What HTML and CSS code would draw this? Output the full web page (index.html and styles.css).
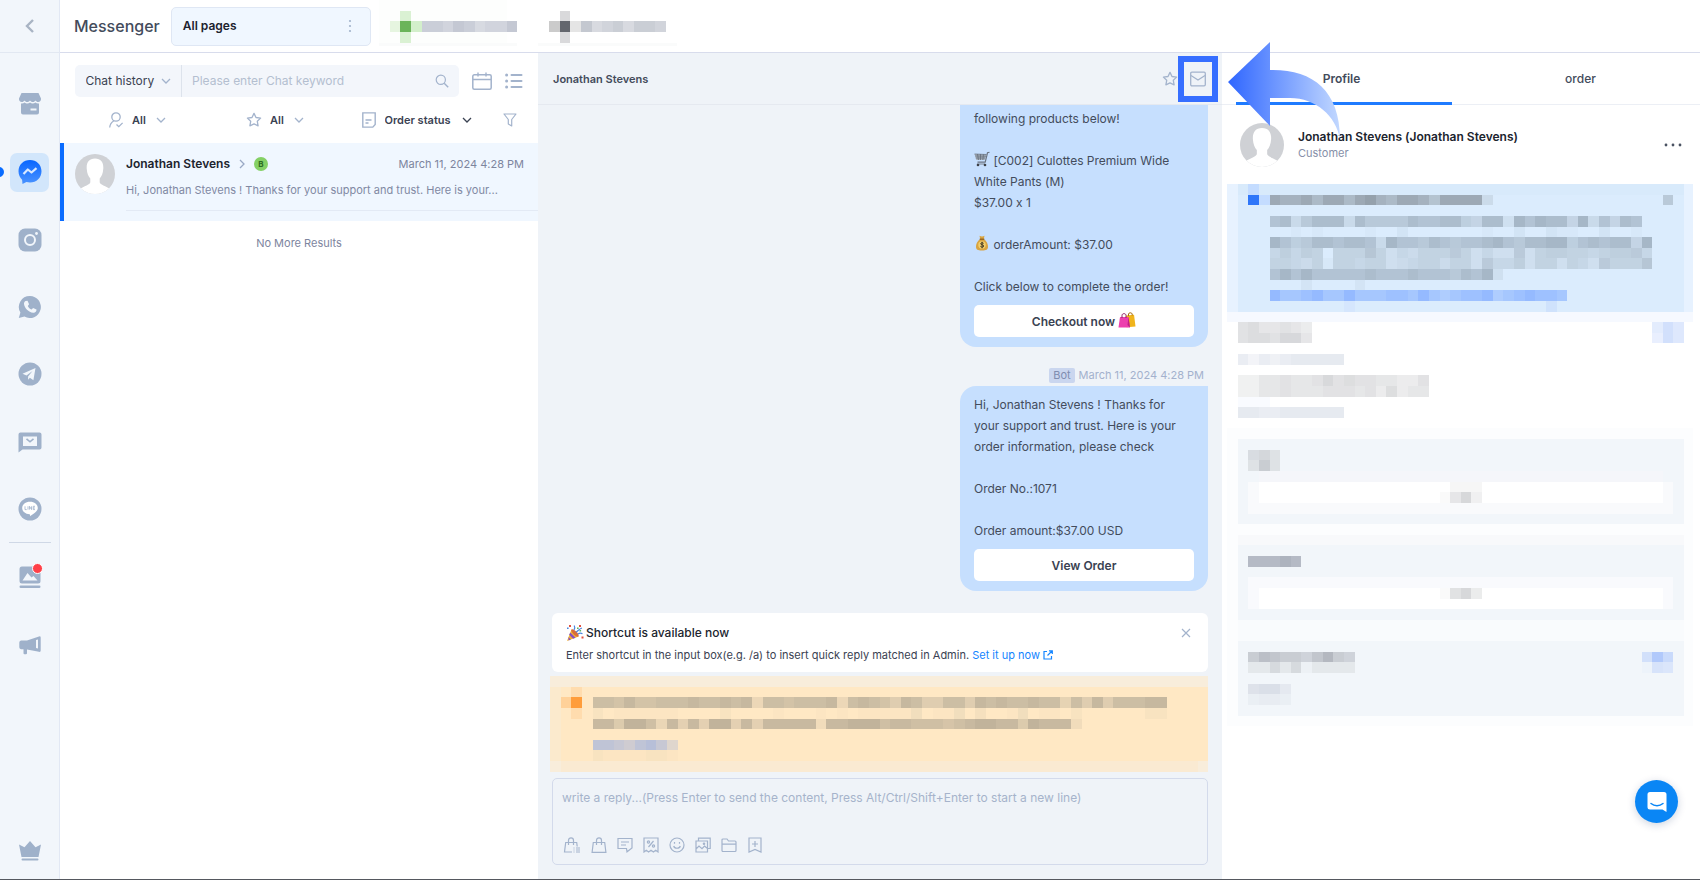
FILE: index.html
```html
<!DOCTYPE html>
<html lang="en">
<head>
<meta charset="utf-8">
<title>Messenger</title>
<link rel="stylesheet" href="styles.css">
</head>
<body>
<svg class="defs" width="0" height="0" aria-hidden="true">
  <defs>
    <symbol id="chevron" viewBox="0 0 10 10"><path d="M1 3l4 4 4-4" fill="none" stroke="currentColor" stroke-width="1.3"/></symbol>
    <symbol id="star" viewBox="0 0 16 16"><path d="M8 1.400l2 4.100 4.600.6-3.300 3.200.8 4.500L8 11.900l-4.100 1.900.8-4.500L1.400 6.100 6 5.500z" fill="none" stroke="currentColor" stroke-width="1.3" stroke-linejoin="round"/></symbol>
    <symbol id="avatar" viewBox="0 0 40 40"><clipPath id="round"><circle cx="20" cy="20" r="20"/></clipPath><g clip-path="url(#round)"><path fill="#cfd1d5" d="M0 0h40v40H0z"/><path fill="#fff" d="M20 4.500c6 0 8.600 4 8.300 10-.3 5-1.800 8-3.600 10v4c1.500 3.500 9 3.500 12.300 9v4H3v-4c3.300-5.500 10.800-5.500 12.300-9v-4c-1.800-2-3.300-5-3.600-10-.3-6 2.300-10 8.300-10z"/></g></symbol>
  </defs>
</svg>
<div class="app">
  <nav class="rail" aria-label="Channels">
    <button class="rail-back" aria-label="Back"><svg width="12" height="16" viewBox="0 0 12 16"><path d="M9 2L3 8l6 6" fill="none" stroke="currentColor" stroke-width="2.400"/></svg></button>
    <div class="rail-list">
      <a class="rail-item" href="#" aria-label="Store"><svg width="24" height="24" viewBox="0 0 24 24" fill="currentColor"><path d="M3.500 1h17l2.500 5.500c.2 2-1 3.500-2.800 3.500-1.200 0-2.200-.6-2.700-1.500-.5.900-1.500 1.500-2.700 1.500S12.500 9.400 12 8.500c-.5.900-1.600 1.500-2.800 1.500S7 9.400 6.500 8.500C6 9.400 5 10 3.800 10 2 10 .8 8.500 1 6.500z"/><path d="M3 11.500c1.500.2 2.700-.2 3.600-1 .9.800 1.700 1 2.700 1s1.900-.3 2.700-1c.8.700 1.700 1 2.700 1s1.900-.3 2.700-1c.9.800 2.100 1.200 3.600 1V20.500a2 2 0 0 1-2 2H5a2 2 0 0 1-2-2z"/><path fill="#f2f6fb" d="M12.500 16.500h6V18.500h-6z"/></svg></a>
      <a class="rail-item active" href="#" aria-label="Messenger"><span class="rail-box"><svg width="24" height="26" viewBox="0 0 24 26"><defs><linearGradient id="msg" x2="0" y2="1"><stop stop-color="#0866ff"/><stop offset="1" stop-color="#4a93ff"/></linearGradient></defs><path fill="url(#msg)" d="M12 1c6.500 0 11.500 4.800 11.500 11.200S18.500 23.500 12 23.500c-1.300 0-2.500-.2-3.600-.5L4.500 25l-.4-4.200C1.900 18.700.5 15.700.5 12.200.5 5.800 5.500 1 12 1z"/><path d="M5.500 15l4.300-4.500 3.700 3 5-4.300" fill="none" stroke="#d9e9ff" stroke-width="2.200" stroke-linejoin="round"/></svg></span></a>
      <a class="rail-item short" href="#" aria-label="Instagram"><svg width="24" height="24" viewBox="0 0 24 24"><rect x=".5" y=".5" width="23" height="23" rx="6.500" fill="currentColor"/><circle cx="12" cy="12" r="5" fill="none" stroke="#f2f6fb" stroke-width="2"/><circle cx="18.500" cy="5.500" r="1.400" fill="#f2f6fb"/></svg></a>
      <a class="rail-item short" href="#" aria-label="WhatsApp"><svg width="24" height="24" viewBox="0 0 24 24"><path fill="currentColor" d="M12 1a11 11 0 1 1-5.500 20.600L.8 23l1.600-5.400A11 11 0 0 1 12 1z"/><path fill="#f2f6fb" d="M7.500 6l2-.3 1.600 3.600-1.300 1.600c.9 1.700 2 2.800 3.800 3.600l1.500-1.500 3.400 1.600c.2 2-1.400 3.400-3.300 3.200C10.500 17.300 6.500 13 6 9c-.1-1.200.5-2.300 1.500-3z"/></svg></a>
      <a class="rail-item" href="#" aria-label="Telegram"><svg width="24" height="24" viewBox="0 0 24 24"><circle cx="12" cy="12" r="11.500" fill="currentColor"/><path fill="#f2f6fb" d="M17.500 6L4.500 11.800l4 1.700 6-4.500-4.400 5.600v3.200l1.800-2.100 3.500 2.500z"/></svg></a>
      <a class="rail-item short" href="#" aria-label="SMS"><svg width="24" height="22" viewBox="0 0 24 22"><path fill="currentColor" d="M2.500 1.500h19a2 2 0 0 1 2 2v13a2 2 0 0 1-2 2H4.500L.5 21.500v-18a2 2 0 0 1 2-2z"/><path fill="#f2f6fb" d="M5 5.500h14v9.500H5z"/><path d="M8.500 7.800L12 10.800l3.500-3" fill="none" stroke="currentColor" stroke-width="1.600"/></svg></a>
      <a class="rail-item short" href="#" aria-label="LINE"><svg width="24" height="24" viewBox="0 0 24 24"><circle cx="12" cy="12" r="11.500" fill="currentColor"/><path fill="#fff" d="M12 4.800c4.400 0 7.800 2.700 7.800 6.200 0 3-3 5-7.800 8.300.2-1.100.1-1.800-.4-2-4.200-.3-7.400-2.900-7.400-6.300 0-3.500 3.400-6.200 7.800-6.200z"/><path d="M7 9.300v3.300h1.700M10 9.300v3.300M11.500 12.600V9.300l2 3.300V9.300M17 9.300h-1.800v3.300H17M15.200 11H17" stroke="currentColor" stroke-width=".8" fill="none"/></svg></a>
    </div>
    <hr class="rail-rule">
    <div class="rail-list">
      <a class="rail-item" href="#" aria-label="Gallery"><svg width="24" height="24" viewBox="0 0 24 24"><rect x="1.500" y="1.500" width="21" height="17" rx="2.500" fill="currentColor"/><path fill="#f2f6fb" d="M4.500 15.500l5-7.500 4 4.500 2-1.500 4 4.500z"/><rect x="1.500" y="20.500" width="21" height="2.500" rx="1.200" fill="currentColor"/></svg><i class="dot"></i></a>
      <a class="rail-item" href="#" aria-label="Broadcast"><svg width="24" height="24" viewBox="0 0 24 24"><path fill="currentColor" d="M3 7.500h6L21 3.400a1.300 1.300 0 0 1 1.700 1.200v13a1.300 1.300 0 0 1-1.700 1.200L9 16.500v3.800a1 1 0 0 1-1 1H6.500a1 1 0 0 1-1-1v-4H3a2 2 0 0 1-1.700-2v-4.800A2 2 0 0 1 3 7.500z"/><path fill="#f2f6fb" d="M18 7l2-.6v9.200l-2-.6z"/></svg></a>
    </div>
    <a class="rail-item rail-end" href="#" aria-label="Plans"><svg width="24" height="24" viewBox="0 0 24 24" fill="currentColor"><path d="M1 5.500l5.500 2.700L12 2l5.500 6.200L23 5.500 20.500 18h-17z"/><rect x="3.500" y="19.500" width="17" height="2" rx="1"/></svg></a>
  </nav>

  <header class="topbar">
    <h1>Messenger</h1>
    <button class="page-tab">All pages <svg width="4" height="14" viewBox="0 0 4 14" fill="currentColor"><circle cx="2" cy="2" r="1.100"/><circle cx="2" cy="7" r="1.100"/><circle cx="2" cy="12" r="1.100"/></svg></button>
    <svg class="mosaic top-mosaic" data-mosaic="pages" viewBox="0 0 304 46" aria-hidden="true"></svg>
  </header>

  <section class="inbox" aria-label="Conversations">
    <div class="search-row">
      <div class="search">
        <label class="pick scope"><select aria-label="Search scope"><option>Chat history</option></select><svg width="10" height="10"><use href="#chevron"/></svg></label>
        <input type="text" placeholder="Please enter Chat keyword" aria-label="Chat keyword">
        <button class="plain" aria-label="Search"><svg width="14" height="14" viewBox="0 0 14 14"><circle cx="5.800" cy="5.800" r="4.600" fill="none" stroke="currentColor" stroke-width="1.200"/><path d="M9.200 9.200l4 4" stroke="currentColor" stroke-width="1.400"/></svg></button>
      </div>
      <button class="plain" aria-label="Calendar"><svg width="20" height="18" viewBox="0 0 20 18"><rect x=".8" y="2.800" width="18.400" height="14.400" rx="1.500" fill="none" stroke="currentColor" stroke-width="1.500"/><path d="M1 7.500h18M6 .5v4M14 .5v4" stroke="currentColor" stroke-width="1.400"/></svg></button>
      <button class="plain" aria-label="List view"><svg width="18" height="16" viewBox="0 0 18 16" fill="currentColor"><circle cx="1.600" cy="2" r="1.500"/><circle cx="1.600" cy="8" r="1.500"/><circle cx="1.600" cy="14" r="1.500"/><rect x="5.500" y="1" width="12" height="2" rx="1"/><rect x="5.500" y="7" width="12" height="2" rx="1"/><rect x="5.500" y="13" width="12" height="2" rx="1"/></svg></button>
    </div>
    <div class="filters">
      <label class="pick"><svg class="pick-icon" width="16" height="16" viewBox="0 0 16 16" fill="none" stroke="currentColor" stroke-width="1.300"><circle cx="8" cy="5" r="4.200"/><path d="M1.700 15.500c.3-3 1.700-5.200 4-6.500M8.500 12.500l2.300 2.200 3.800-3.800"/></svg><select aria-label="Assignee"><option>All</option></select><svg width="10" height="10"><use href="#chevron"/></svg></label>
      <label class="pick"><svg class="pick-icon" width="16" height="16"><use href="#star"/></svg><select aria-label="Starred"><option>All</option></select><svg width="10" height="10"><use href="#chevron"/></svg></label>
      <label class="pick dark"><svg class="pick-icon" width="16" height="16" viewBox="0 0 16 16" fill="none" stroke="currentColor" stroke-width="1.400"><path d="M1.800.9h12.400v11.600l-2.400 2.600H1.800zM4.500 8h6M4.500 11h3"/></svg><select aria-label="Order status"><option>Order status</option></select><svg width="10" height="10"><use href="#chevron"/></svg></label>
      <button class="plain" aria-label="Filter"><svg width="14" height="14" viewBox="0 0 14 14"><path d="M1 1h12L8.700 6.500v6.400L5.300 11V6.500z" fill="none" stroke="currentColor" stroke-width="1.200" stroke-linejoin="round"/></svg></button>
    </div>
    <a class="thread" href="#">
      <svg width="40" height="40"><use href="#avatar"/></svg>
      <div class="thread-body">
        <div class="thread-top"><strong>Jonathan Stevens</strong><svg width="6" height="10" viewBox="0 0 6 10"><path d="M1 1l4 4-4 4" fill="none" stroke="currentColor" stroke-width="1.300"/></svg><b class="badge">B</b><time>March 11, 2024 4:28 PM</time></div>
        <p>Hi, Jonathan Stevens ! Thanks for your support and trust. Here is your...</p>
      </div>
    </a>
    <p class="no-more">No More Results</p>
  </section>

  <main class="chat">
    <header class="chat-head">
      <h2>Jonathan Stevens</h2>
      <button class="plain" aria-label="Star"><svg width="16" height="16"><use href="#star"/></svg></button>
      <button class="plain marked" aria-label="Mark as unread"><svg width="16" height="16" viewBox="0 0 16 16"><rect x=".7" y="1.200" width="14.600" height="13.600" rx="1.200" fill="none" stroke="currentColor" stroke-width="1.300"/><path d="M1 4.500l7 4.500 7-4.500" fill="none" stroke="currentColor" stroke-width="1.300"/></svg></button>
    </header>
    <div class="messages">
      <article class="bubble cut">
        <p>following products below!</p>
        <br>
        <p><svg class="emoji" width="16" height="16" viewBox="0 0 16 16"><path d="M15.500 1.200l-2 .6-2.300 9.400H3.500" fill="none" stroke="#6b7482" stroke-width="1.200"/><path fill="#a9b2bd" d="M.5 3l12 .5-1.700 5.500H2.300z"/><path d="M.5 3l12 .5M1.200 5l10.800.2M1.800 7h9.600M3.500 3l1 6M6.500 3v6M9.500 3.300L8.800 9" stroke="#5f6875" stroke-width=".7"/><path d="M3 13h8" stroke="#7c8490"/><circle cx="4" cy="14" r="1.300" fill="#3d4148"/><circle cx="11" cy="14" r="1.300" fill="#3d4148"/></svg> [C002] Culottes Premium Wide White Pants (M)</p>
        <p>$37.00 x 1</p>
        <br>
        <p><svg class="emoji" width="16" height="16" viewBox="0 0 16 16"><path fill="#d9a441" d="M5.500.8c1.600.8 3.400.8 5 0L9.800 4c3 2 4.400 5.300 4.200 8-.1 2.500-1.500 3.500-6 3.500s-5.900-1-6-3.500c-.2-2.700 1.200-6 4.200-8z"/><path fill="#8a5a1c" d="M5.700 3.600h4.600v1.200H5.700z"/><circle cx="8" cy="10" r="3.700" fill="#f4d06a"/><path d="M9.600 8.400c-.5-.9-3-.8-3 .4s3.200.8 3.200 2.200-2.800 1.400-3.400.3M8.100 6.800v6.500" fill="none" stroke="#463a22" stroke-width="1"/></svg> orderAmount: $37.00</p>
        <br>
        <p>Click below to complete the order!</p>
        <button class="cta">Checkout now <svg class="emoji" width="18" height="16" viewBox="0 0 18 16"><path fill="#f0b41c" d="M8 3.500l8-.8 1.500 11.800-9 .8z"/><path d="M10.500 4V2c0-1.500 3.500-1.700 3.700 0v1.500" fill="none" stroke="#a66d12"/><path fill="#ec3fae" d="M2 5h8.500L12 15.500H.5z"/><path fill="#c01f86" d="M10.500 5L12 15.500 9.500 13z"/><path d="M4 6V3.500C4 1 8 1 8 3.500V6" fill="none" stroke="#8e1c64"/></svg></button>
      </article>
      <div class="meta"><span class="bot">Bot</span><time>March 11, 2024 4:28 PM</time></div>
      <article class="bubble">
        <p>Hi, Jonathan Stevens ! Thanks for your support and trust. Here is your order information, please check</p>
        <br>
        <p>Order No.:1071</p>
        <br>
        <p>Order amount:$37.00 USD</p>
        <button class="cta">View Order</button>
      </article>
    </div>
    <div class="chat-foot">
      <aside class="tip">
        <div class="tip-title"><svg width="18" height="18" viewBox="0 0 18 18"><path fill="#f2b632" d="M5.500 5.500l7 7L1 17z"/><path fill="#8a4fc0" d="M4.300 8.500l5.300 5.200-2.500 1-4-4zM2.400 13l2.500 2.500-2.300.9z"/><path fill="#d96d3a" d="M5.500 5.500c1-1 3 .3 4.700 2s3.200 4 2.300 5c-1 .8-3.200-.6-4.900-2.300S4.600 6.400 5.500 5.500z"/><path d="M8 6c1-1.500 1-3 .2-4.500M12 10c1.500-1 3-1 4.500-.2M10 8c2-1 3-3 6-4" fill="none" stroke="#4a86e0" stroke-width="1.200"/><path fill="#e2503f" d="M3 1h2v2H3zM13 1h2v2h-2zM15.500 12.500h2v2h-2z"/><path fill="#58b565" d="M11 3.500h1.600v1.600H11zM13.500 6h1.600v1.600h-1.600z"/><path fill="#4a86e0" d="M1 3.500h1.600v1.600H1z"/></svg><strong>Shortcut is available now</strong><button class="plain" aria-label="Close"><svg width="10" height="10" viewBox="0 0 10 10"><path d="M1 1l8 8M9 1L1 9" stroke="currentColor" stroke-width="1.200"/></svg></button></div>
        <p>Enter shortcut in the input box(e.g. /a) to insert quick reply matched in Admin. <a href="#">Set it up now <svg width="10" height="10" viewBox="0 0 10 10" fill="none" stroke="currentColor" stroke-width="1.200"><path d="M4 1.500H1v7.500h7.500V6M6 .8h3.300V4M9 1L4.500 5.500"/></svg></a></p>
      </aside>
      <svg class="mosaic notice" data-mosaic="notice" viewBox="0 0 658 96" aria-hidden="true"></svg>
      <div class="composer">
        <textarea rows="1" aria-label="Reply" placeholder="write a reply...(Press Enter to send the content, Press Alt/Ctrl/Shift+Enter to start a new line)"></textarea>
        <div class="tools">
          <button class="plain" aria-label="Order"><svg width="18" height="16" viewBox="0 0 18 16"><path d="M9 15H1.500L2.700 5.500h11l.5 4M5.500 8V3.500c0-3.500 5-3.500 5 0V8"/><path d="M10.500 11h1M13 11h4M10.500 13h1M13 13h4M10.500 15h1M13 15h4"/></svg></button>
          <button class="plain" aria-label="Products"><svg width="16" height="16" viewBox="0 0 16 16"><path d="M2.300 5.500h11.400l1.200 9.800H1.100zM5.500 8V3.500c0-3.500 5-3.500 5 0V8"/></svg></button>
          <button class="plain" aria-label="Quick reply"><svg width="16" height="16" viewBox="0 0 16 16"><path d="M1 1.500h14v9.500l-5 3.800-.5-3.300H1zM4 5h8M4 8h5"/></svg></button>
          <button class="plain" aria-label="Coupon"><svg width="16" height="16" viewBox="0 0 16 16"><path d="M1 1h14v14l-2.300-1.700L10.400 15 8 13.300 5.600 15l-2.300-1.700L1 15zM5.500 10l5-6"/><circle cx="5.500" cy="5" r="1.100"/><circle cx="10.500" cy="9" r="1.100"/></svg></button>
          <button class="plain" aria-label="Emoji"><svg width="16" height="16" viewBox="0 0 16 16"><circle cx="8" cy="8" r="7"/><path d="M4.700 9c.7 3 5.900 3 6.600 0M5.500 5v1.800M10.500 5v1.800"/></svg></button>
          <button class="plain" aria-label="Image"><svg width="16" height="16" viewBox="0 0 16 16"><path d="M3.500 4V1.200h11.700v10.300H12.500M1 4h11.500v11H1zM1 12l3-3 3 2.700L9.500 9l3 2.500"/><circle cx="9" cy="6.700" r=".7"/></svg></button>
          <button class="plain" aria-label="File"><svg width="16" height="16" viewBox="0 0 16 16"><path d="M2 14.500a1 1 0 0 1-1-1V3a1 1 0 0 1 1-1h4l1.500 2H14a1 1 0 0 1 1 1v8.500a1 1 0 0 1-1 1zM1 7.200h14"/></svg></button>
          <button class="plain" aria-label="Save"><svg width="16" height="16" viewBox="0 0 16 16"><path d="M2 1h12v14l-6-2.500L2 15zM8 4v6M5 7h6"/></svg></button>
        </div>
      </div>
    </div>
  </main>

  <aside class="profile">
    <div class="tabs">
      <button class="tab on">Profile</button>
      <button class="tab">order</button>
    </div>
    <svg class="arrow" width="114" height="98" viewBox="0 0 114 98" aria-hidden="true"><defs><linearGradient id="arw" x2="1"><stop stop-color="#2f66ff"/><stop offset="1" stop-color="#c2d8ff"/></linearGradient></defs><path fill="url(#arw)" d="M0 40L42 0v28C84 27 112 48 112 97 108 74 88 56 62 56H42v28z"/></svg>
    <div class="person">
      <svg width="44" height="44"><use href="#avatar"/></svg>
      <div><h3>Jonathan Stevens (Jonathan Stevens)</h3><p>Customer</p></div>
      <button class="plain more" aria-label="More"><svg width="18" height="4" viewBox="0 0 18 4" fill="currentColor"><circle cx="2" cy="2" r="1.400"/><circle cx="9" cy="2" r="1.400"/><circle cx="16" cy="2" r="1.400"/></svg></button>
    </div>
    <svg class="mosaic details" data-mosaic="details" viewBox="0 0 466 543" aria-hidden="true"></svg>
  </aside>
</div>
<button class="help" aria-label="Open chat support"><svg width="20" height="22" viewBox="0 0 20 22"><path fill="#fff" d="M3 1h14a2.500 2.500 0 0 1 2.500 2.500V21l-4-2.500H3A2.500 2.500 0 0 1 .5 16V3.500A2.500 2.500 0 0 1 3 1z"/><path d="M4 12.500c3.500 3 8.500 3 12 0" fill="none" stroke="#0a86f5" stroke-width="1.500" stroke-linecap="round"/></svg></button>
<script src="mosaic.js"></script>
</body>
</html>
```
FILE: styles.css
```css
* { box-sizing: border-box; }
body {
  margin: 0;
  font-family: Inter, "Liberation Sans", sans-serif;
  font-size: 12px;
  line-height: 16px;
  font-feature-settings: "calt" 0;
  color: #3a4252;
  background: #fff;
}
h1, h2, h3, p { margin: 0; font-weight: 400; }
a { color: inherit; text-decoration: none; }
button, select, input, textarea { font: inherit; color: inherit; border: 0; background: none; padding: 0; margin: 0; }
select { appearance: none; }
svg { display: block; flex: none; }
.defs { position: absolute; }
.plain { color: #a3b3cc; display: flex; align-items: center; justify-content: center; }

.app {
  display: grid;
  grid-template: 53px 1fr / 60px 478px 1fr 478px;
  height: 100vh;
  border-bottom: 1px solid #55585f;
}

/* channel rail */
.rail {
  grid-row: 1 / 3;
  display: flex;
  flex-direction: column;
  background: #f2f6fb;
  border-right: 1px solid #e2e8f4;
  color: #9fb1ca;
}
.rail-back { height: 53px; border-bottom: 1px solid #e2e8f2; color: #a9b4c4; display: flex; align-items: center; justify-content: center; margin-bottom: 17px; }
.rail-item { position: relative; display: flex; align-items: center; justify-content: center; height: 68px; }
.rail-item.short { height: 67px; }
.rail-box { display: flex; align-items: center; justify-content: center; width: 39px; height: 39px; border-radius: 7px; background: #d2e6fb; }
.rail-item.active::before { content: ""; position: absolute; left: -6px; top: 29px; width: 10px; height: 10px; border-radius: 50%; background: #0a6cff; }
.rail-rule { width: 42px; height: 1px; margin: 0 auto; border: 0; background: #cfd8e6; }
.dot { position: absolute; left: 32px; top: 20px; width: 11px; height: 11px; border-radius: 50%; background: #ff4048; border: 1px solid #fff; }
.rail-end { margin-top: auto; height: 56px; }

/* top bar */
.topbar {
  grid-column: 2 / 5;
  display: flex;
  align-items: center;
  border-bottom: 1px solid #d8dcec;
  padding-left: 14px;
}
.topbar h1 { font-size: 16px; font-weight: 500; line-height: 20px; color: #434b5b; margin-right: 11px; }
.page-tab {
  display: flex; align-items: center; justify-content: space-between;
  width: 200px; height: 39px; padding: 0 18px 0 11px;
  border: 1px solid #dfe7f4; border-radius: 5px; background: #f0f7ff;
  font-weight: 600; color: #1c222e;
}
.page-tab svg { color: #a3b3cc; }
.top-mosaic { width: 304px; height: 46px; align-self: flex-start; margin-left: 8px; }

/* conversation list */
.inbox { min-width: 0; }
.search-row { display: flex; align-items: center; gap: 13px; padding: 12px 15px 0; }
.search { flex: 1; display: flex; align-items: center; height: 32px; background: #f3f6fb; border-radius: 5px; padding-right: 10px; }
.search input { flex: 1; min-width: 0; padding-left: 10px; }
.search input::placeholder { color: #b4bfd0; opacity: 1; }
.pick { display: flex; align-items: center; justify-content: center; color: #a3b3cc; }
.pick select { color: #3a4252; }
.pick-icon { margin-right: 8px; }
.scope { height: 32px; width: 107px; border-right: 1px solid #dde3ec; gap: 6px; }
.filters { display: grid; grid-template-columns: 1fr 1fr 144px 44px; padding: 12px 6px 13px 8px; height: 46px; align-items: center; }
.filters select { font-size: 11px; font-weight: 600; margin-right: 10px; }
.filters .dark > svg:last-child { color: #3a4252; }
.thread {
  display: flex; gap: 11px; height: 78px; padding: 11px 0 0 11px;
  border-left: 4px solid #0a6cff; background: #f0f7ff;
}
.thread-body { flex: 1; height: 57px; border-bottom: 1px solid #e3eaf5; color: #8189a3; }
.thread-top { display: flex; align-items: center; gap: 9px; height: 20px; padding-right: 14px; color: #98a8c4; }
.thread-top strong { font-weight: 600; color: #20242e; }
.thread-top time { margin-left: auto; font-size: 11px; color: #7d859e; }
.badge { width: 14px; height: 14px; border-radius: 50%; background: #84d065; color: #2c6b21; font-size: 8px; line-height: 14px; text-align: center; }
.thread-body p { font-size: 11px; line-height: 32px; }
.no-more { text-align: center; font-size: 11px; color: #7d859e; padding-top: 14px; }

/* chat */
.chat { display: flex; flex-direction: column; min-width: 0; background: #eff3f8; min-height: 0; }
.chat-head { display: flex; align-items: center; height: 52px; flex: none; border-bottom: 1px solid #e5e9f0; padding: 0 4px 0 15px; }
.chat-head h2 { flex: 1; font-size: 11px; font-weight: 600; color: #434b5b; }
.marked { width: 40px; height: 46px; border: 6px solid #366eff; }
.messages { flex: 1; min-height: 0; overflow: hidden; display: flex; flex-direction: column; justify-content: flex-end; align-items: flex-end; padding: 0 14px 22px; }
.bubble { flex: none; width: 248px; padding: 8px 14px 10px; border-radius: 16px 0 16px 16px; background: #c6dffe; font-size: 12px; line-height: 21px; color: #434c5c; }
.bubble.cut { border-radius: 0 0 16px 16px; }
.bubble p { padding-right: 8px; }
.emoji { display: inline-block; vertical-align: -2px; }
.cta { display: block; width: 100%; height: 32px; margin-top: 8px; border-radius: 5px; background: #fff; font-weight: 600; color: #3a4252; }
.meta { flex: none; display: flex; align-items: center; gap: 4px; margin-top: 20px; height: 19px; padding: 0 4px 3px 0; font-size: 11px; color: #a3b1cd; }
.bot { background: #cad6ef; color: #7f8db0; padding: 0 4px; line-height: 15px; border-radius: 2px; }
.chat-foot { flex: none; padding: 0 14px 14px; }
.tip { height: 59px; padding: 10px 17px 0 14px; border-radius: 6px; background: #fff; }
.tip-title { display: flex; align-items: center; gap: 2px; height: 20px; }
.tip-title strong { flex: 1; font-weight: 500; color: #20242e; }
.tip p { font-size: 11px; line-height: 24px; }
.tip a { color: #1585ff; }
.tip a svg { display: inline-block; vertical-align: -1px; }
.notice { width: calc(100% + 2px); height: auto; margin: 4px 0 6px -2px; }
.composer { border: 1px solid #d3daeb; border-radius: 5px; height: 87px; padding: 11px 9px 0; display: flex; flex-direction: column; }
.composer textarea { resize: none; width: 100%; height: 16px; overflow: hidden; }
.composer textarea::placeholder { color: #a6b3cb; opacity: 1; }
.tools { display: flex; gap: 10px; margin-top: 31px; padding-left: 1px; }
.tools svg { fill: none; stroke: currentColor; stroke-width: 1.2; }

/* profile */
.profile { position: relative; min-width: 0; background: #fff; }
.tabs { display: grid; grid-template-columns: 1fr 1fr; height: 52px; border-bottom: 1px solid #eceff5; }
.tab { position: relative; font-weight: 500; color: #434b5b; }
.tab.on { font-weight: 600; }
.tab.on::after { content: ""; position: absolute; left: 14px; right: 9px; bottom: -1px; height: 3px; background: #1f7bff; }
.arrow { position: absolute; left: 6px; top: -11px; z-index: 2; }
.person { display: flex; align-items: center; gap: 14px; height: 79px; padding: 0 18px; }
.person h3 { font-size: 12px; font-weight: 600; line-height: 18px; color: #20242e; }
.person p { font-size: 11px; line-height: 15px; color: #868fa8; }
.more { margin-left: auto; color: #4a5262; }
.details { width: calc(100% - 12px); height: auto; margin-left: 5px; }
.mosaic { shape-rendering: crispEdges; }

.help { position: absolute; right: 22px; bottom: 57px; width: 43px; height: 43px; border-radius: 50%; background: #0a86f5; display: flex; align-items: center; justify-content: center; box-shadow: 0 2px 8px rgba(0, 40, 100, .2); }
```
FILE: mosaic.js
```javascript
// Obscured blocks. Entries are either
//   [row, col, rows, cols, colour]      a solid area
//   [row, col, ink, "levels"]           a run of cells, one digit of ink strength each
const CELL = 10.63;
const mosaics = {
  pages: [
    [0, 0, 4, 12, "#fdfefd"], [4, 0, 1, 13, "#fafbfb"], [4, 15, 1, 13, "#fafbfb"],
    [1, 2, 1, 1, "#daf1d3"], [3, 2, 1, 1, "#daf1d3"],
    [2, 1, 1, 1, "#e6f5e0"], [2, 2, 1, 1, "#6bb45a"], [2, 3, 1, 1, "#d3efcb"],
    [2, 4, "#c4c8d3", "887986779"],
    [1, 17, 1, 1, "#d9d9db"], [3, 17, 1, 1, "#d9d9db"],
    [2, 16, 1, 1, "#cbcbcb"], [2, 17, 1, 1, "#63666d"], [2, 18, 1, 1, "#e5e5e5"],
    [2, 19, "#c4c8d0", "96786887"]
  ],
  notice: [
    [0, 0, 9, 62, "#f8eddb"], [1, 0, 7, 62, "#fbeacd"], [1, 1, 7, 61, "#ffe8c4"], [8, 1, 1, 60, "#faead2"],
    [1, 2, 1, 1, "#ffdcae"], [2, 1, 1, 1, "#ffd199"], [2, 2, 1, 1, "#ff9d3b"], [3, 2, 1, 1, "#ffdcae"],
    [2, 4, "#c6b89f", "887977888988989388788893898759855885989889884859588899"],
    [3, 4, "#e0d2b4", "201111110000200001000101011111401140300140110200000022"],
    [4, 4, "#c1b39b", "8859973848499484888882889997887776789988598882"],
    [6, 4, "#b7bfd8", "88768974"],
    [7, 4, "#e0d2b4", "21111221"]
  ],
  details: [
    [0, 0, 12, 44, "#e7f2ff"], [0, 1, 12, 42, "#dbecfd"], [0, 1, 1, 42, "#d8eafb"], [12, 0, 1, 44, "#f6f9ff"],
    [0, 2, 1, 1, "#c4dcff"], [1, 2, 1, 1, "#2f76f9"], [1, 3, 1, 1, "#c4dcff"],
    [1, 4, "#95a1ac", "877868868976887588882"], [1, 41, 1, 1, "#b9c9d8"],
    [3, 4, "#a6b7c7", "78368883866668778854882979884937487"],
    [4, 4, "#b5c9d9", "001010000100200000001002002110020010"],
    [5, 4, "#a6b7c7", "975688788739776876778976889957878849"],
    [6, 4, "#b6c6d5", "575760666963546668635338367766567785"],
    [7, 4, "#b6c6d5", "665461665663456646638557366365386669"],
    [8, 4, "#a6b7c7", "797977777877787776879200"],
    [9, 7, 1, 1, "#d3e4f5"], [9, 12, 1, 1, "#d3e4f5"],
    [10, 4, "#8cb4ff", "8667866866677686567785678776"],
    [11, 30, 1, 1, "#cfe2fc"], [11, 11, 1, 1, "#d5e6fd"],
    [13, 1, "#d2d3d6", "6755654"], [14, 1, "#d2d3d6", "6776885"],
    [13, 40, "#cddcfc", "586"], [14, 40, "#cddcfc", "486"],
    [16, 1, "#dadfe9", "5354566666"],
    [18, 1, "#d3d4d6", "335565568676655446"], [19, 1, "#d3d4d6", "335565556665647455"],
    [20, 1, 1, 3, "#f9fbff"],
    [21, 1, "#dadfe9", "6655666666"],
    [23, 0, 28, 44, "#fcfdfe"],
    [24, 1, 8, 42, "#f2f6fa"], [25, 2, "#c4c8cc", "564"], [26, 2, "#c4c8cc", "484"],
    [27, 3, 1, 38, "#f5f6fa"], [28, 2, 3, 40, "#f9fafc"], [28, 3, 2, 38, "#ffffff"],
    [28, 21, 1, 3, "#f6f6f6"], [29, 20, "#d2d3d5", "1583"],
    [33, 1, 1, 42, "#f8f9fb"], [34, 1, 7, 42, "#f2f6fa"],
    [35, 2, "#adb3be", "88898"],
    [37, 2, 3, 40, "#f9fafd"], [38, 3, 2, 38, "#ffffff"], [38, 20, "#d2d3d5", "1684"],
    [41, 1, 2, 42, "#f9fbfd"], [43, 1, 7, 42, "#f2f6fa"],
    [44, 2, "#b4b8c0", "6876657965"], [45, 2, "#c8ccd0", "3363613333"],
    [44, 39, "#a9c4fb", "485"], [45, 39, "#c9dafb", "165"],
    [47, 2, "#d3d8e3", "6774"], [48, 2, "#dce0e9", "3443"]
  ]
};

document.querySelectorAll("[data-mosaic]").forEach(svg => {
  const cell = (row, col, rows, cols, fill, alpha) => {
    const r = document.createElementNS("http://www.w3.org/2000/svg", "rect");
    const x = Math.round(col * CELL), y = Math.round(row * CELL);
    r.setAttribute("x", x);
    r.setAttribute("y", y);
    r.setAttribute("width", Math.round((col + cols) * CELL) - x);
    r.setAttribute("height", Math.round((row + rows) * CELL) - y);
    r.setAttribute("fill", fill);
    r.setAttribute("fill-opacity", alpha);
    svg.append(r);
  };
  mosaics[svg.dataset.mosaic].forEach(m => {
    if (m.length === 5) cell(...m, 1);
    else [...m[3]].forEach((d, i) => cell(m[0], m[1] + i, 1, 1, m[2], d / 9));
  });
});
```
